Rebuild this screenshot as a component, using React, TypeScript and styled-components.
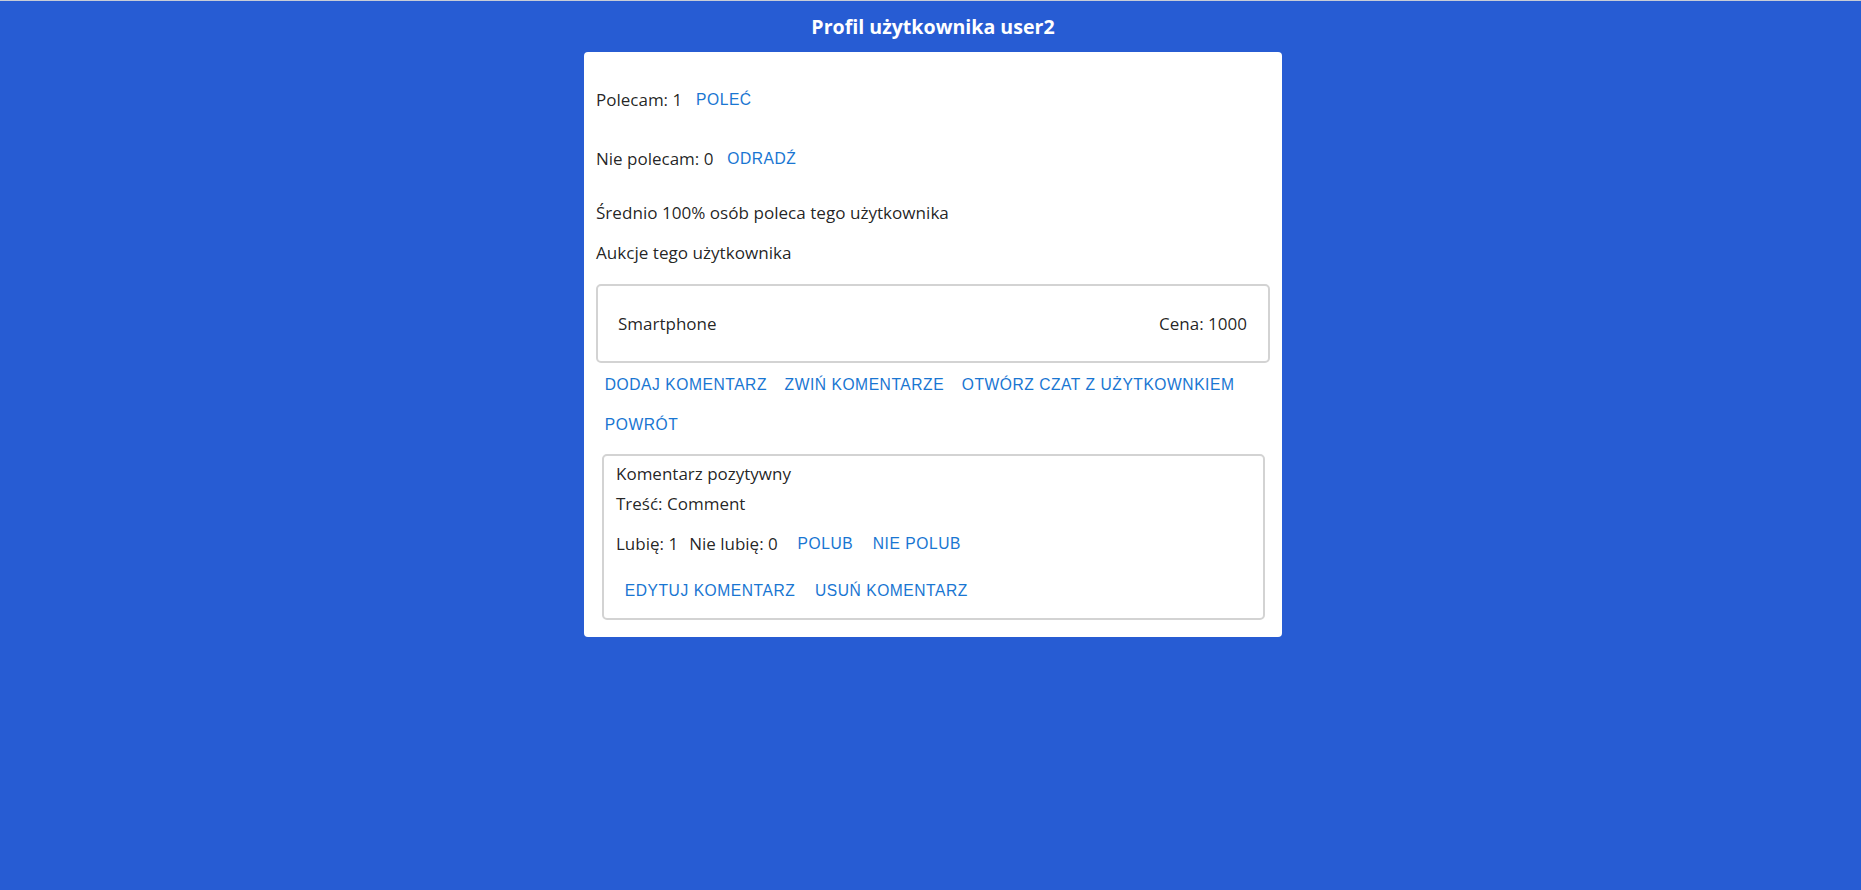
import React from "react";
import styled, { createGlobalStyle } from "styled-components";

const GlobalStyle = createGlobalStyle`
  html, body {
    margin: 0;
    padding: 0;
    background: #275cd3;
  }
  body {
    font-family: "Open Sans", "Noto Sans", Arial, sans-serif;
    color: rgba(0, 0, 0, 0.87);
  }
  * { box-sizing: border-box; }
`;

const Page = styled.div`
  min-height: 100vh;
  border-top: 1px solid #c8ccd6;
  padding-left: 5px;
`;

const Title = styled.h1`
  margin: 0 0 9px;
  padding-top: 10px;
  text-align: center;
  color: #ffffff;
  font-family: "Open Sans", sans-serif;
  font-weight: 700;
  font-size: 19.6px;
  line-height: 32px;
`;

const Card = styled.div`
  width: 698px;
  margin: 0 auto;
  background: #ffffff;
  border-radius: 4px;
  padding: 12px;
  display: flex;
  flex-direction: column;
`;

const StatRow = styled.div<{ $top: number }>`
  display: flex;
  align-items: center;
  gap: 5px;
  height: 40px;
  margin-top: ${(p) => p.$top}px;
`;

const Text = styled.span`
  font-size: 17px;
  line-height: 26px;
  white-space: nowrap;
`;

const Para = styled.p<{ $top: number }>`
  margin: ${(p) => p.$top}px 0 0;
  font-size: 17.1px;
  line-height: 26px;
`;

const AuctionBox = styled.div`
  margin-top: 18px;
  height: 79px;
  border: 2px solid #d3d3d3;
  border-radius: 5px;
  padding: 0 21px 0 20px;
  display: flex;
  justify-content: space-between;
  align-items: center;
  font-size: 17px;
`;

const ActionBar = styled.div`
  margin-top: 2px;
  display: flex;
  flex-wrap: wrap;
`;

const TextButton = styled.button`
  display: inline-flex;
  align-items: center;
  justify-content: center;
  height: 40px;
  min-width: 70px;
  padding: 0 8.8px;
  background: transparent;
  border: none;
  border-radius: 4px;
  color: #1976d2;
  font-family: "Liberation Sans", Arial, sans-serif;
  font-weight: 400;
  font-size: 15.6px;
  letter-spacing: 0.55px;
  text-transform: uppercase;
  white-space: nowrap;
  cursor: pointer;
`;

const CommentBox = styled.div`
  margin: 9px 5px 5px 6px;
  border: 2px solid #d3d3d3;
  border-radius: 5px;
  padding: 4px 12px 7px;
  display: flex;
  flex-direction: column;
`;

const CommentLine = styled.div<{ $top?: number }>`
  margin-top: ${(p) => p.$top ?? 0}px;
  height: 28px;
  line-height: 28px;
  font-size: 17px;
`;

const LikeRow = styled.div`
  margin-top: 6px;
  height: 40px;
  display: flex;
  align-items: center;
  gap: 11px;
`;

const ButtonGroup = styled.div<{ $top?: number }>`
  display: flex;
  gap: 2px;
  margin-top: ${(p) => p.$top ?? 0}px;
`;

export default function App() {
  return (
    <>
      <GlobalStyle />
      <Page>
        <Title>Profil użytkownika user2</Title>
        <Card>
          <StatRow $top={16}>
            <Text>Polecam: 1</Text>
            <TextButton>Poleć</TextButton>
          </StatRow>
          <StatRow $top={19}>
            <Text>Nie polecam: 0</Text>
            <TextButton>Odradź</TextButton>
          </StatRow>
          <Para $top={21}>Średnio 100% osób poleca tego użytkownika</Para>
          <Para $top={14}>Aukcje tego użytkownika</Para>
          <AuctionBox>
            <span>Smartphone</span>
            <span>Cena: 1000</span>
          </AuctionBox>
          <ActionBar>
            <TextButton>Dodaj komentarz</TextButton>
            <TextButton>Zwiń komentarze</TextButton>
            <TextButton>Otwórz czat z użytkownkiem</TextButton>
            <TextButton>Powrót</TextButton>
          </ActionBar>
          <CommentBox>
            <CommentLine>Komentarz pozytywny</CommentLine>
            <CommentLine $top={2}>Treść: Comment</CommentLine>
            <LikeRow>
              <Text>Lubię: 1</Text>
              <Text>Nie lubię: 0</Text>
              <ButtonGroup>
                <TextButton>Polub</TextButton>
                <TextButton>Nie polub</TextButton>
              </ButtonGroup>
            </LikeRow>
            <ButtonGroup $top={7}>
              <TextButton>Edytuj komentarz</TextButton>
              <TextButton>Usuń komentarz</TextButton>
            </ButtonGroup>
          </CommentBox>
        </Card>
      </Page>
    </>
  );
}
